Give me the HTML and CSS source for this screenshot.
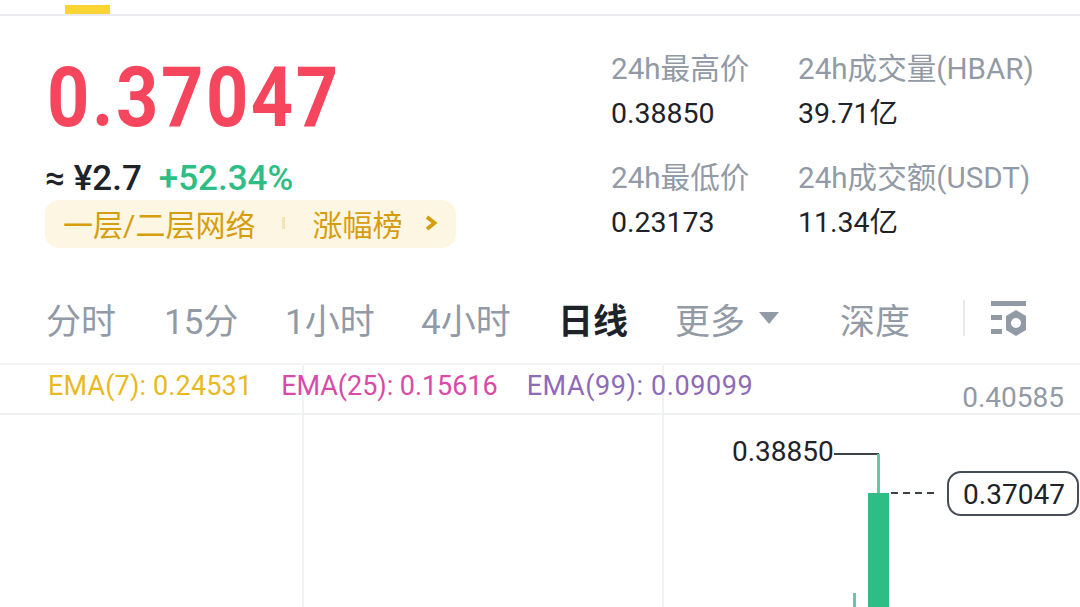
FILE: index.html
```html
<!DOCTYPE html>
<html>
<head>
    <meta charset="UTF-8">
    <title>HBAR/USDT</title>
    <link rel="stylesheet" href="styles.css">
</head>
<body>
    <!-- 상단 탭 표시줄 -->
    <div class="top-bar"><span class="top-indicator"></span></div>

    <!-- 시세 요약 -->
    <div class="summary">
        <div class="price-box">
            <div class="price">0.37047</div>
            <div class="sub-price">
                <span class="approx">≈ ¥2.7</span>
                <span class="change">+52.34%</span>
            </div>
            <div class="rank-tag">
                <span class="rank-name">一层/二层网络</span>
                <span class="rank-sep"></span>
                <span class="rank-name">涨幅榜</span>
                <svg class="rank-arrow" width="14" height="16" viewBox="0 0 14 16"><path d="M2 2 L9.5 8 L2 14" fill="none" stroke="#d69e0e" stroke-width="3.8"/></svg>
            </div>
        </div>
        <div class="stats">
            <div class="stat stat-a">
                <div class="stat-label">24h最高价</div>
                <div class="stat-value">0.38850</div>
            </div>
            <div class="stat stat-b">
                <div class="stat-label">24h成交量(HBAR)</div>
                <div class="stat-value">39.71亿</div>
            </div>
            <div class="stat stat-a">
                <div class="stat-label">24h最低价</div>
                <div class="stat-value">0.23173</div>
            </div>
            <div class="stat stat-b">
                <div class="stat-label">24h成交额(USDT)</div>
                <div class="stat-value">11.34亿</div>
            </div>
        </div>
    </div>

    <!-- 기간 탭 -->
    <div class="tabs">
        <span class="tab tab-1">分时</span>
        <span class="tab tab-2">15分</span>
        <span class="tab tab-3">1小时</span>
        <span class="tab tab-4">4小时</span>
        <span class="tab tab-5 active">日线</span>
        <span class="tab tab-6">更多<i class="caret"></i></span>
        <span class="tab tab-7">深度</span>
        <span class="tab-sep"></span>
        <svg class="tab-icon" width="36" height="36" viewBox="0 0 36 36" fill="#929aa5">
            <rect x="1" y="1" width="35" height="5"/>
            <rect x="1" y="15" width="11" height="5"/>
            <rect x="1" y="29" width="11" height="5"/>
            <path fill-rule="evenodd" d="M26 10 L36 16 V30 L26 36 L16 30 V16 Z M26 18 A5 5 0 1 0 26 28 A5 5 0 1 0 26 18 Z"/>
        </svg>
    </div>

    <!-- 차트 -->
    <div class="chart">
        <div class="grid-v grid-v1"></div>
        <div class="grid-v grid-v2"></div>
        <div class="legend">
            <span class="ema ema-7">EMA(7): 0.24531</span>
            <span class="ema ema-25">EMA(25): 0.15616</span>
            <span class="ema ema-99">EMA(99): 0.09099</span>
        </div>
        <div class="axis-top">0.40585</div>
        <div class="high-label">0.38850</div>
        <div class="high-line"></div>
        <div class="wick"></div>
        <div class="candle"></div>
        <div class="small-wick"></div>
        <div class="last-dash"></div>
        <div class="last-price">0.37047</div>
    </div>
</body>
</html>
```

FILE: styles.css
```css
/* 전체 페이지 */
body {
    margin: 0;
    width: 1080px;
    height: 607px;
    overflow: hidden;
    background-color: #fff;
    font-family: Roboto, "Noto Sans CJK SC", sans-serif;
    color: #1e2329;
}

/* 상단 탭 표시줄 */
.top-bar {
    height: 14px;
    border-bottom: 2px solid #eaecef;
    padding-left: 65px;
    display: flex;
    align-items: flex-end;
}

.top-indicator {
    width: 45px;
    height: 9px;
    background-color: #fcd535;
}

/* 시세 요약 */
.summary {
    display: flex;
    justify-content: space-between;
    height: 269px;
    padding-left: 45px;
    box-sizing: border-box;
}

.price {
    margin-top: 37px;
    margin-left: 2px;
    font-size: 84px;
    line-height: 90px;
    font-weight: 700;
    color: #f6465d;
    letter-spacing: 2.9px;
    transform: scaleX(0.88);
    transform-origin: left center;
}

.sub-price {
    display: flex;
    gap: 17px;
    margin-top: 14px;
    height: 43px;
    align-items: center;
    font-size: 35px;
    font-weight: 500;
}

.change {
    color: #2ebd85;
}

.rank-tag {
    display: flex;
    align-items: center;
    width: 411px;
    height: 48px;
    box-sizing: border-box;
    padding-left: 18px;
    padding-bottom: 3px;
    background-color: #fdf6e3;
    border-radius: 14px;
    color: #d69e0e;
    font-size: 30px;
}

.rank-sep {
    width: 3px;
    height: 12px;
    margin: 0 27px;
    background-color: #f0e4b8;
}

.rank-arrow {
    margin-left: 23px;
}

/* 24h 통계 */
.stats {
    display: grid;
    grid-template-columns: 187px 282px;
    grid-auto-rows: 109px;
    padding-top: 33px;
}

.stat-label {
    font-size: 29.6px;
    line-height: 40px;
    color: #929aa5;
    white-space: nowrap;
}

.stat-value {
    font-size: 28.5px;
    line-height: 40px;
    margin-top: 5px;
    white-space: nowrap;
}

/* 기간 탭 */
.tabs {
    display: flex;
    align-items: center;
    height: 66px;
    padding-bottom: 12px;
    padding-left: 46px;
    border-bottom: 2px solid #f3f4f6;
    font-size: 35px;
    color: #929aa5;
}

.tab {
    white-space: nowrap;
}

.tab-1 { width: 118px; }
.tab-2 { width: 121px; }
.tab-3 { width: 136px; }
.tab-4 { width: 137px; }
.tab-5 { width: 117px; }
.tab-6 { width: 165px; }
.tab-7 { width: 123px; }

.active {
    color: #1e2329;
    font-weight: 700;
}

.caret {
    display: inline-block;
    vertical-align: 10px;
    margin-left: 14px;
    border-left: 10px solid transparent;
    border-right: 10px solid transparent;
    border-top: 12px solid #929aa5;
}

.tab-sep {
    width: 2px;
    height: 36px;
    background-color: #e6e8ea;
    margin-right: 25px;
}

/* 차트 */
.chart {
    position: relative;
    height: 243px;
}

.legend {
    position: relative;
    display: flex;
    gap: 29px;
    height: 42px;
    padding-bottom: 6px;
    padding-left: 48px;
    align-items: center;
    border-bottom: 2px solid #f0f1f2;
    font-size: 27px;
}

.ema-7 { color: #e8b923; letter-spacing: 0.15px; }
.ema-25 { color: #d94aa8; letter-spacing: -0.05px; }
.ema-99 { color: #8e6ab8; letter-spacing: 0.6px; }

.grid-v {
    position: absolute;
    top: 0;
    bottom: 0;
    width: 2px;
    background-color: #f0f1f2;
}

.grid-v1 { left: 302px; }
.grid-v2 { left: 662px; }

.axis-top {
    position: absolute;
    top: 16px;
    right: 16px;
    font-size: 28px;
    color: #929aa5;
}

.high-label {
    position: absolute;
    top: 70px;
    left: 732px;
    font-size: 28px;
    color: #1e2329;
}

.high-line {
    position: absolute;
    top: 88px;
    left: 834px;
    width: 45px;
    height: 2px;
    background-color: #3c4248;
}

.wick {
    position: absolute;
    top: 89px;
    left: 877px;
    width: 3px;
    height: 40px;
    background-color: #5fcca2;
}

.candle {
    position: absolute;
    top: 128px;
    left: 868px;
    width: 21px;
    bottom: 0;
    background-color: #2ebd85;
}

.small-wick {
    position: absolute;
    top: 228px;
    left: 853px;
    width: 3px;
    bottom: 0;
    background-color: #5fcca2;
}

.last-dash {
    position: absolute;
    top: 127px;
    left: 891px;
    width: 43px;
    height: 2px;
    background: repeating-linear-gradient(90deg, #3c4248 0 7px, transparent 7px 12px);
}

.last-price {
    position: absolute;
    top: 106px;
    left: 947px;
    width: 132px;
    height: 45px;
    box-sizing: border-box;
    border: 2px solid #474d57;
    border-radius: 14px;
    background-color: #fff;
    padding-left: 2px;
    font-size: 28px;
    line-height: 43px;
    text-align: center;
}
```
